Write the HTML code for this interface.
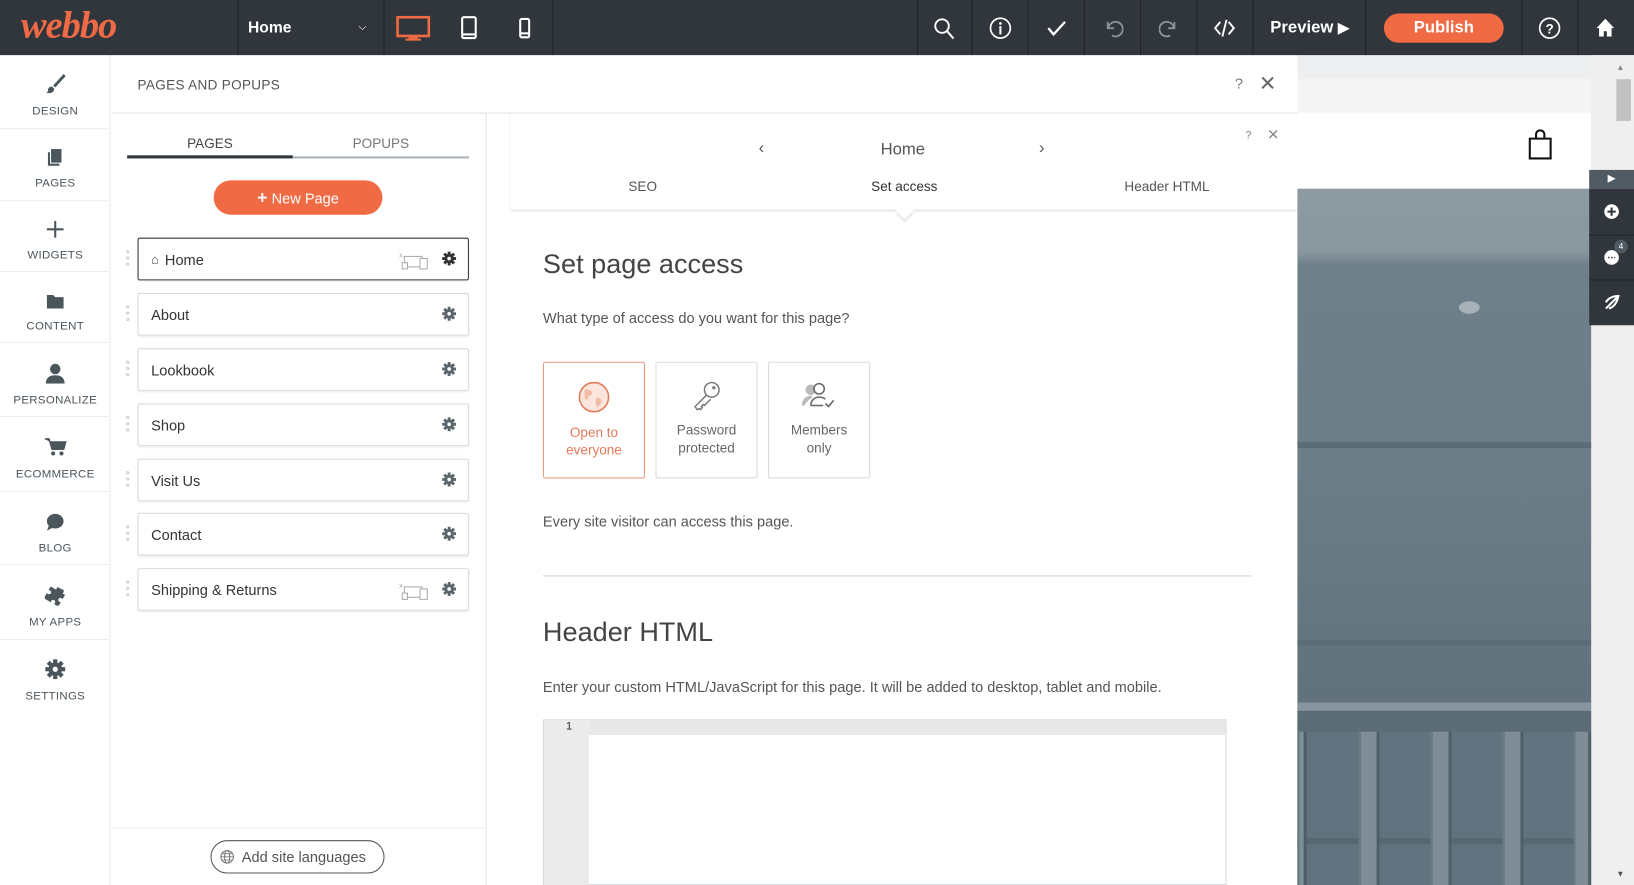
<!DOCTYPE html>
<html><head><meta charset="utf-8"><style>
*{box-sizing:border-box;margin:0;padding:0}
html,body{width:1634px;height:885px;overflow:hidden;background:#fff;font-family:"Liberation Sans",sans-serif}
#w{position:absolute;left:0;top:0;width:1568px;height:849px;transform:scale(1.04209,1.0424);transform-origin:0 0}
.a{position:absolute}
.top{left:0;top:0;width:1568px;height:53px;background:#30363b}
.dv{position:absolute;top:0;width:1px;height:53px;background:#1f2427}
.ti{position:absolute;top:0;height:53px;display:flex;align-items:center;justify-content:center;color:#fff}
.side{left:0;top:53px;width:106px;height:796px;background:#fff;border-right:1px solid #e6e8ea}
.si{position:absolute;left:0;width:106px;text-align:center;font-size:11px;color:#4a555c;letter-spacing:.3px}
.si .ic{height:26px;display:flex;align-items:flex-end;justify-content:center;margin-bottom:10px}
.sl{position:absolute;left:0;width:106px;height:1px;background:#eceeef}
.pg{position:absolute;left:132px;width:318px;height:41px;border:1px solid #d6dbde;border-radius:2px;box-shadow:0 1px 2px rgba(0,0,0,.08);font-size:14px;color:#333;display:flex;align-items:center;padding-left:12px}
.gear{position:absolute;right:11px;top:12px}
.dots{position:absolute;left:-12px;top:11px;width:4px;font-size:0}
.dots i{display:block;width:3px;height:3px;border-radius:50%;border:1px solid #ccc;margin-bottom:3px}
.card{position:absolute;top:347px;width:98px;height:112px;border:1px solid #d6dde0;border-radius:2px;text-align:center;font-size:13px;color:#666;line-height:17px}
.card svg{display:block;margin:17px auto 9px}
.bar{position:absolute;top:702px;width:20px;height:147px;background:#7f8d97;border-left:2px solid #6a7a84;border-right:3px solid #4f5f69}
</style></head><body><div id="w">
<div class="a top">
 <div class="a" style="left:20px;top:3px;font-family:'Liberation Serif',serif;font-style:italic;font-weight:bold;font-size:37px;color:#ef6a45;letter-spacing:-1px">webbo</div>
 <div class="dv" style="left:228px"></div><div class="dv" style="left:368px"></div><div class="dv" style="left:530px"></div>
 <div class="ti" style="left:238px;font-size:15px;font-weight:bold">Home</div>
 <div class="ti" style="left:344px;font-size:10px">&#9013;</div>
 <svg class="a" style="left:380px;top:15px" width="33" height="25" viewBox="0 0 33 25"><rect x="1.5" y="1.5" width="30" height="18" fill="none" stroke="#f06a43" stroke-width="2.5"/><rect x="12" y="20" width="9" height="2" fill="#f06a43"/><rect x="9" y="22" width="15" height="2" fill="#f06a43"/></svg>
 <svg class="a" style="left:442px;top:15px" width="16" height="23"><rect x="1.5" y="1.5" width="13" height="20" rx="1.5" fill="none" stroke="#fff" stroke-width="2"/><rect x="1" y="17" width="14" height="2" fill="#fff"/></svg>
 <svg class="a" style="left:498px;top:17px" width="11" height="20"><rect x="1.2" y="1.2" width="8.6" height="17.6" rx="1.5" fill="none" stroke="#fff" stroke-width="2"/><rect x="1" y="14" width="9" height="2" fill="#fff"/></svg>
 <div class="dv" style="left:880px"></div><div class="dv" style="left:932px"></div><div class="dv" style="left:986px"></div><div class="dv" style="left:1040px"></div><div class="dv" style="left:1094px"></div><div class="dv" style="left:1148px"></div><div class="dv" style="left:1202px"></div><div class="dv" style="left:1310px"></div><div class="dv" style="left:1460px"></div><div class="dv" style="left:1514px"></div>
 <svg class="a" style="left:896px;top:17px" width="20" height="21"><circle cx="8" cy="8" r="6.5" fill="none" stroke="#fff" stroke-width="1.8"/><path d="M12.5 12.5L19 20" stroke="#fff" stroke-width="2"/></svg>
 <svg class="a" style="left:949px;top:16px" width="22" height="22"><circle cx="11" cy="11" r="9.5" fill="none" stroke="#fff" stroke-width="1.6"/><circle cx="11" cy="6.5" r="1.3" fill="#fff"/><rect x="10" y="9" width="2" height="8" fill="#fff"/></svg>
 <svg class="a" style="left:1004px;top:19px" width="20" height="16"><path d="M2 8l5 6L18 2" fill="none" stroke="#fff" stroke-width="2.2"/></svg>
 <svg class="a" style="left:1058px;top:17px" width="20" height="20"><path d="M5 4v6h6M5.5 10A7 7 0 1 1 9 17" fill="none" stroke="#8b9297" stroke-width="1.8"/></svg>
 <svg class="a" style="left:1112px;top:17px" width="20" height="20"><path d="M15 4v6H9M14.5 10A7 7 0 1 0 11 17" fill="none" stroke="#8b9297" stroke-width="1.8"/></svg>
 <svg class="a" style="left:1164px;top:16px" width="22" height="22"><path d="M7 5L2 11l5 6M15 5l5 6-5 6M13 3L9 19" fill="none" stroke="#fff" stroke-width="1.8"/></svg>
 <div class="ti" style="left:1219px;font-size:16px;font-weight:bold">Preview&nbsp;<span style="font-size:14px">&#9654;</span></div>
 <div class="a" style="left:1328px;top:13px;width:115px;height:28px;border-radius:14px;background:#f06a43;color:#fff;font-size:16px;font-weight:bold;text-align:center;line-height:28px">Publish</div>
 <svg class="a" style="left:1476px;top:16px" width="22" height="22"><circle cx="11" cy="11" r="9.5" fill="none" stroke="#fff" stroke-width="1.6"/><text x="11" y="16" font-size="13" font-weight="bold" fill="#fff" text-anchor="middle" font-family="Liberation Sans">?</text></svg>
 <svg class="a" style="left:1531px;top:17px" width="19" height="19"><path d="M9.5 1L1 10h2.5v8h4.5v-5h3v5h4.5v-8H18z" fill="#fff"/></svg>
</div>
<div class="a side">
 <div class="si" style="top:12px"><div class="ic"><svg width="22" height="22"><path d="M19 2L9 13l2 2L21 4zM8 14c-3 0-4 2-4 4 0 1-1 2-2 2 4 1 8 0 8-4z" fill="#4a555c"/></svg></div>DESIGN</div>
 <div class="sl" style="top:70px"></div>
 <div class="si" style="top:81px"><div class="ic"><svg width="16" height="20"><rect x="4" y="3" width="10" height="13" fill="#4a555c"/><path d="M2 6v12h10" fill="none" stroke="#4a555c" stroke-width="2"/></svg></div>PAGES</div>
 <div class="sl" style="top:139px"></div>
 <div class="si" style="top:150px"><div class="ic"><svg width="18" height="18"><path d="M9 1v16M1 9h16" stroke="#4a555c" stroke-width="2"/></svg></div>WIDGETS</div>
 <div class="sl" style="top:207px"></div>
 <div class="si" style="top:218px"><div class="ic"><svg width="18" height="16"><path d="M1 2h6l2 2h8v11H1z" fill="#4a555c"/></svg></div>CONTENT</div>
 <div class="sl" style="top:275px"></div>
 <div class="si" style="top:289px"><div class="ic"><svg width="20" height="20"><circle cx="10" cy="6" r="5" fill="#4a555c"/><path d="M1 20c0-6 4-8 9-8s9 2 9 8z" fill="#4a555c"/></svg></div>PERSONALIZE</div>
 <div class="sl" style="top:346px"></div>
 <div class="si" style="top:360px"><div class="ic"><svg width="22" height="20"><path d="M1 2h4l3 10h11l2-7H6" fill="#4a555c" stroke="#4a555c" stroke-width="1.5"/><circle cx="9" cy="16" r="2" fill="#4a555c"/><circle cx="17" cy="16" r="2" fill="#4a555c"/></svg></div>ECOMMERCE</div>
 <div class="sl" style="top:418px"></div>
 <div class="si" style="top:431px"><div class="ic"><svg width="18" height="18"><ellipse cx="9" cy="8" rx="8" ry="7" fill="#4a555c"/><path d="M3 12l-2 5 6-3z" fill="#4a555c"/></svg></div>BLOG</div>
 <div class="sl" style="top:488px"></div>
 <div class="si" style="top:502px"><div class="ic"><svg width="20" height="20"><path d="M8 2h4v3a2 2 0 1 1 3 0h3v5a2 2 0 1 0 0 3v5h-5a2 2 0 1 0-3 0H2v-6a2 2 0 1 0 0-3V5h6z" fill="#4a555c" transform="rotate(30 10 10)"/></svg></div>MY APPS</div>
 <div class="sl" style="top:560px"></div>
 <div class="si" style="top:573px"><div class="ic"><svg width="20" height="20" viewBox="0 0 20 20"><g fill="#4a555c"><circle cx="10" cy="10" r="6.5"/><rect x="8" y="0.5" width="4" height="19"/><rect x="8" y="0.5" width="4" height="19" transform="rotate(45 10 10)"/><rect x="8" y="0.5" width="4" height="19" transform="rotate(90 10 10)"/><rect x="8" y="0.5" width="4" height="19" transform="rotate(135 10 10)"/></g><circle cx="10" cy="10" r="2.5" fill="#fff"/></svg></div>SETTINGS</div>
</div>
<div class="a" style="left:107px;top:53px;width:1138px;height:796px;background:#fff"></div>
<div class="a" style="left:132px;top:74px;font-size:13px;color:#555;letter-spacing:.3px">PAGES AND POPUPS</div>
<div class="a" style="left:1185px;top:72px;font-size:14px;color:#777">?</div>
<div class="a" style="left:1208px;top:68px;font-size:20px;color:#666;font-weight:300">&#10005;</div>
<div class="a" style="left:107px;top:108px;width:1138px;height:1px;background:#dde2e5"></div>
<div class="a" style="left:466px;top:109px;width:1px;height:740px;background:#dde2e5"></div>
<div class="a" style="left:122px;top:130px;width:159px;text-align:center;font-size:13px;color:#444">PAGES</div>
<div class="a" style="left:281px;top:130px;width:169px;text-align:center;font-size:13px;color:#777">POPUPS</div>
<div class="a" style="left:122px;top:149px;width:159px;height:3px;background:#30363b"></div>
<div class="a" style="left:281px;top:150px;width:169px;height:2px;background:#aab2b7"></div>
<div class="a" style="left:205px;top:173px;width:162px;height:33px;border-radius:17px;background:#f06a43;color:#fff;font-size:14px;text-align:center;line-height:33px"><b style="font-size:17px">+</b> New Page</div>
<div class="pg" style="top:228px;border-color:#30363b;height:41px"><div class="dots"><i></i><i></i><i></i></div><span style="font-size:12px;margin-right:6px">&#8962;</span>Home
 <svg class="a" style="right:36px;top:12px" width="30" height="18"><text x="0" y="6" font-size="7" fill="#aaa">x</text><rect x="5" y="5" width="17" height="10" fill="none" stroke="#aaa"/><rect x="20" y="7" width="7" height="10" fill="#fff" stroke="#aaa"/><rect x="3" y="11" width="5" height="6" fill="#fff" stroke="#aaa"/></svg>
 <svg class="gear" width="14" height="14" viewBox="0 0 20 20"><g fill="#333"><circle cx="10" cy="10" r="6.5"/><rect x="8" y="0.5" width="4" height="19"/><rect x="8" y="0.5" width="4" height="19" transform="rotate(45 10 10)"/><rect x="8" y="0.5" width="4" height="19" transform="rotate(90 10 10)"/><rect x="8" y="0.5" width="4" height="19" transform="rotate(135 10 10)"/></g><circle cx="10" cy="10" r="2.5" fill="#fff"/></svg></div>
<div class="pg" style="top:281px"><div class="dots"><i></i><i></i><i></i></div>About<svg class="gear" width="14" height="14" viewBox="0 0 20 20"><g fill="#5a656c"><circle cx="10" cy="10" r="6.5"/><rect x="8" y="0.5" width="4" height="19"/><rect x="8" y="0.5" width="4" height="19" transform="rotate(45 10 10)"/><rect x="8" y="0.5" width="4" height="19" transform="rotate(90 10 10)"/><rect x="8" y="0.5" width="4" height="19" transform="rotate(135 10 10)"/></g><circle cx="10" cy="10" r="2.5" fill="#fff"/></svg></div>
<div class="pg" style="top:334px"><div class="dots"><i></i><i></i><i></i></div>Lookbook<svg class="gear" width="14" height="14" viewBox="0 0 20 20"><g fill="#5a656c"><circle cx="10" cy="10" r="6.5"/><rect x="8" y="0.5" width="4" height="19"/><rect x="8" y="0.5" width="4" height="19" transform="rotate(45 10 10)"/><rect x="8" y="0.5" width="4" height="19" transform="rotate(90 10 10)"/><rect x="8" y="0.5" width="4" height="19" transform="rotate(135 10 10)"/></g><circle cx="10" cy="10" r="2.5" fill="#fff"/></svg></div>
<div class="pg" style="top:387px"><div class="dots"><i></i><i></i><i></i></div>Shop<svg class="gear" width="14" height="14" viewBox="0 0 20 20"><g fill="#5a656c"><circle cx="10" cy="10" r="6.5"/><rect x="8" y="0.5" width="4" height="19"/><rect x="8" y="0.5" width="4" height="19" transform="rotate(45 10 10)"/><rect x="8" y="0.5" width="4" height="19" transform="rotate(90 10 10)"/><rect x="8" y="0.5" width="4" height="19" transform="rotate(135 10 10)"/></g><circle cx="10" cy="10" r="2.5" fill="#fff"/></svg></div>
<div class="pg" style="top:440px"><div class="dots"><i></i><i></i><i></i></div>Visit Us<svg class="gear" width="14" height="14" viewBox="0 0 20 20"><g fill="#5a656c"><circle cx="10" cy="10" r="6.5"/><rect x="8" y="0.5" width="4" height="19"/><rect x="8" y="0.5" width="4" height="19" transform="rotate(45 10 10)"/><rect x="8" y="0.5" width="4" height="19" transform="rotate(90 10 10)"/><rect x="8" y="0.5" width="4" height="19" transform="rotate(135 10 10)"/></g><circle cx="10" cy="10" r="2.5" fill="#fff"/></svg></div>
<div class="pg" style="top:492px"><div class="dots"><i></i><i></i><i></i></div>Contact<svg class="gear" width="14" height="14" viewBox="0 0 20 20"><g fill="#5a656c"><circle cx="10" cy="10" r="6.5"/><rect x="8" y="0.5" width="4" height="19"/><rect x="8" y="0.5" width="4" height="19" transform="rotate(45 10 10)"/><rect x="8" y="0.5" width="4" height="19" transform="rotate(90 10 10)"/><rect x="8" y="0.5" width="4" height="19" transform="rotate(135 10 10)"/></g><circle cx="10" cy="10" r="2.5" fill="#fff"/></svg></div>
<div class="pg" style="top:545px"><div class="dots"><i></i><i></i><i></i></div>Shipping &amp; Returns
 <svg class="a" style="right:36px;top:12px" width="30" height="18"><text x="0" y="6" font-size="7" fill="#aaa">x</text><rect x="5" y="5" width="17" height="10" fill="none" stroke="#aaa"/><rect x="20" y="7" width="7" height="10" fill="#fff" stroke="#aaa"/><rect x="3" y="11" width="5" height="6" fill="#fff" stroke="#aaa"/></svg>
 <svg class="gear" width="14" height="14" viewBox="0 0 20 20"><g fill="#5a656c"><circle cx="10" cy="10" r="6.5"/><rect x="8" y="0.5" width="4" height="19"/><rect x="8" y="0.5" width="4" height="19" transform="rotate(45 10 10)"/><rect x="8" y="0.5" width="4" height="19" transform="rotate(90 10 10)"/><rect x="8" y="0.5" width="4" height="19" transform="rotate(135 10 10)"/></g><circle cx="10" cy="10" r="2.5" fill="#fff"/></svg></div>
<div class="a" style="left:107px;top:794px;width:359px;height:1px;background:#eceeef"></div>
<div class="a" style="left:202px;top:806px;width:167px;height:32px;border:1px solid #555;border-radius:16px;font-size:14px;color:#555;line-height:30px;padding-left:29px">Add site languages
 <svg class="a" style="left:8px;top:8px" width="14" height="14"><circle cx="7" cy="7" r="6" fill="none" stroke="#777"/><ellipse cx="7" cy="7" rx="2.5" ry="6" fill="none" stroke="#777"/><path d="M1 7h12M2 4h10M2 10h10" stroke="#777" stroke-width=".8"/></svg></div>
<div class="a" style="left:1195px;top:124px;font-size:11px;color:#888">?</div>
<div class="a" style="left:1216px;top:121px;font-size:14px;color:#888">&#10005;</div>
<div class="a" style="left:728px;top:134px;font-size:16px;color:#555">&#8249;</div>
<div class="a" style="left:997px;top:134px;font-size:16px;color:#555">&#8250;</div>
<div class="a" style="left:845px;top:135px;font-size:16px;color:#555">Home</div>
<div class="a" style="left:490px;top:106px;width:755px;height:95px;box-shadow:0 2px 2px rgba(0,0,0,.12);background:transparent"></div>
<div class="a" style="left:603px;top:171px;font-size:13px;color:#555">SEO</div>
<div class="a" style="left:836px;top:171px;font-size:13px;color:#333">Set access</div>
<div class="a" style="left:1079px;top:171px;font-size:13px;color:#555">Header HTML</div>
<div class="a" style="left:862px;top:196px;width:12px;height:12px;background:#fff;transform:rotate(45deg);box-shadow:2px 2px 2px rgba(0,0,0,.1)"></div>
<div class="a" style="left:521px;top:238px;font-size:26px;color:#444">Set page access</div>
<div class="a" style="left:521px;top:297px;font-size:14px;color:#555">What type of access do you want for this page?</div>
<div class="card" style="left:521px;border-color:#e89a80;color:#e47a5a"><svg width="32" height="32"><circle cx="16" cy="16" r="14" fill="#fbe5dc" stroke="#e47a5a" stroke-width="1.5"/><path d="M7 9c3-1 7 0 7 3s-4 2-4 5-3 1-3-1zM18 17c2-1 5 0 5 3s-3 4-3 6c-2-2-3-6-2-9z" fill="#f2b9a4"/></svg>Open to<br>everyone</div>
<div class="card" style="left:629px"><svg width="28" height="30"><circle cx="19" cy="9" r="7" fill="none" stroke="#777" stroke-width="1.4"/><circle cx="21" cy="7" r="1.6" fill="#777"/><path d="M14 14L3 25l2 3 2-1 1 1 2-2-1-1 2-2 1 1 6-6" fill="none" stroke="#777" stroke-width="1.4"/></svg>Password<br>protected</div>
<div class="card" style="left:737px"><svg width="34" height="30"><circle cx="9" cy="9" r="5" fill="#bbb"/><path d="M2 24c0-6 4-8 8-8" fill="#bbb" stroke="#bbb" stroke-width="3"/><circle cx="17" cy="8" r="5" fill="#fff" stroke="#666" stroke-width="1.5"/><path d="M9 24c0-5 4-8 8-8 3 0 5 1 6 2M9 24h12" fill="none" stroke="#666" stroke-width="1.5"/><path d="M23 22l3 3 5-6" fill="none" stroke="#666" stroke-width="1.5"/></svg>Members<br>only</div>
<div class="a" style="left:521px;top:492px;font-size:14px;color:#555">Every site visitor can access this page.</div>
<div class="a" style="left:521px;top:552px;width:680px;height:1px;background:#ccd2d5"></div>
<div class="a" style="left:521px;top:591px;font-size:26px;color:#444">Header HTML</div>
<div class="a" style="left:521px;top:651px;font-size:14px;color:#555">Enter your custom HTML/JavaScript for this page. It will be added to desktop, tablet and mobile.</div>
<div class="a" style="left:521px;top:690px;width:656px;height:159px;border:1px solid #d8dcde;background:#fff"></div>
<div class="a" style="left:522px;top:691px;width:43px;height:158px;background:#ebebeb"></div>
<div class="a" style="left:565px;top:691px;width:611px;height:14px;background:#e8e8e8"></div>
<div class="a" style="left:543px;top:691px;font-size:11px;color:#333">1</div>
<div class="a" style="left:1245px;top:53px;width:323px;height:796px;background:#eceeef"></div>
<div class="a" style="left:1245px;top:76px;width:282px;height:32px;background:#f5f5f5"></div>
<div class="a" style="left:1245px;top:108px;width:282px;height:73px;background:#fff"></div>
<svg class="a" style="left:1466px;top:124px" width="24" height="30"><path d="M2 9h20v19H2z" fill="none" stroke="#111" stroke-width="2"/><path d="M8 9V5a4 4 0 0 1 8 0v4" fill="none" stroke="#111" stroke-width="2"/></svg>
<div class="a" style="left:1245px;top:181px;width:282px;height:668px;background:linear-gradient(180deg,#8e9aa2 0%,#8a979f 9%,#6f808b 11%,#6c7d88 40%,#62737e 70%,#56666f 100%)"></div>
<div class="a" style="left:1245px;top:424px;width:282px;height:6px;background:#5b6c77"></div>
<div class="a" style="left:1245px;top:614px;width:282px;height:5px;background:#5b6c77"></div>
<div class="a" style="left:1245px;top:674px;width:282px;height:8px;background:#8795a0"></div>
<div class="a" style="left:1245px;top:682px;width:282px;height:20px;background:#5c6c76"></div>
<div class="a" style="left:1245px;top:702px;width:282px;height:147px;background:#627380"></div>
<div class="a" style="left:1245px;top:804px;width:282px;height:6px;background:#586872"></div>
<div class="bar" style="left:1245px;width:9px"></div>
<div class="bar" style="left:1304px"></div>
<div class="bar" style="left:1373px"></div>
<div class="bar" style="left:1442px"></div>
<div class="bar" style="left:1510px;width:17px"></div>
<div class="a" style="left:1400px;top:289px;width:20px;height:12px;border-radius:50%;background:#a7b1b7"></div>
<div class="a" style="left:1527px;top:53px;width:41px;height:796px;background:#efefef"></div>
<div class="a" style="left:1551px;top:76px;width:14px;height:40px;background:#c1c1c1"></div>
<div class="a" style="left:1551px;top:60px;font-size:8px;color:#888">&#9650;</div>
<div class="a" style="left:1551px;top:834px;font-size:8px;color:#555">&#9660;</div>
<div class="a" style="left:1525px;top:163px;width:43px;height:18px;background:#505a62;color:#fff;font-size:10px;text-align:center;line-height:18px">&#9654;</div>
<div class="a" style="left:1525px;top:181px;width:43px;height:131px;background:#30363b"></div>
<div class="a" style="left:1525px;top:225px;width:43px;height:1px;background:#1f2427"></div>
<div class="a" style="left:1525px;top:268px;width:43px;height:1px;background:#1f2427"></div>
<svg class="a" style="left:1538px;top:195px" width="17" height="17"><circle cx="8.5" cy="8" r="7" fill="#fff"/><path d="M8.5 4v8M4.5 8h8" stroke="#30363b" stroke-width="2"/></svg>
<svg class="a" style="left:1538px;top:238px" width="17" height="17"><circle cx="8.5" cy="9" r="7" fill="#fff"/><path d="M5 9h7" stroke="#30363b" stroke-width="1.5" stroke-dasharray="1.5 1.5"/></svg>
<div class="a" style="left:1549px;top:230px;width:13px;height:13px;border-radius:50%;background:#505a62;color:#fff;font-size:8px;text-align:center;line-height:13px">4</div>
<svg class="a" style="left:1539px;top:282px" width="16" height="16"><path d="M2 14L14 2M2 8c3-5 8-6 12-6-1 5-3 10-9 12" fill="none" stroke="#fff" stroke-width="2"/></svg>
</div></body></html>
